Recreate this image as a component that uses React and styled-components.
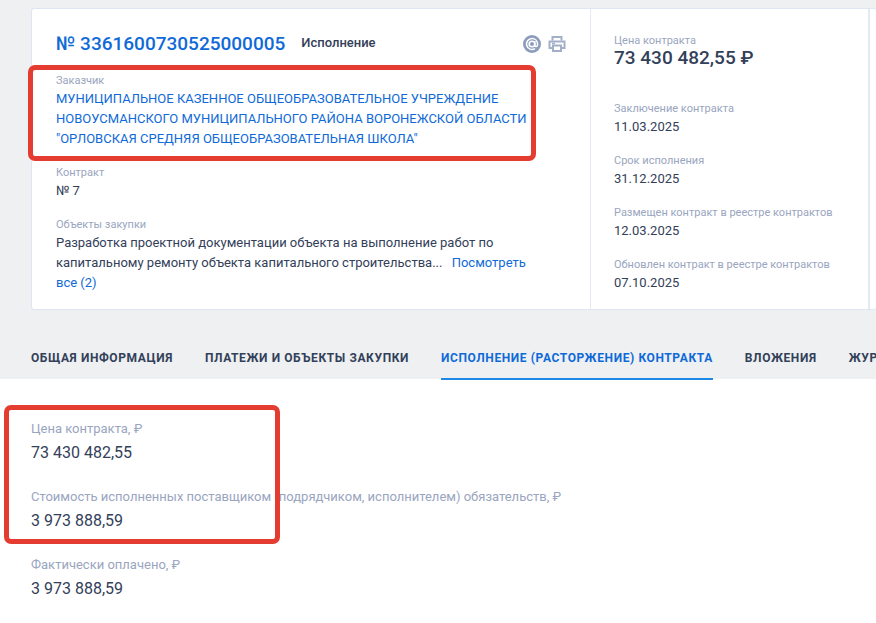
import React from "react";
import styled, { createGlobalStyle } from "styled-components";

const Global = createGlobalStyle`
  html, body { margin: 0; padding: 0; background: #fff; }
  body { font-family: Roboto, "Liberation Sans", sans-serif; color: #334059; overflow: hidden; }
  * { box-sizing: border-box; }
`;

const Page = styled.div`
  position: relative;
  width: 876px;
  height: 623px;
  overflow: hidden;
`;

const Top = styled.section`
  background: #eef0f2;
  height: 379px;
  padding: 8px 0 0 31px;
`;

const Card = styled.div`
  display: flex;
  width: 845px;
  height: 302px;
  background: #fff;
  border: 1px solid #dfe6f2;
  border-radius: 3px;
  border-right: none;
`;

const MainCol = styled.div`
  width: 559px;
  padding: 22px 0 0 24px;
  border-right: 1px solid #e4e9f4;
  flex: none;
`;

const SideCol = styled.div`
  width: 279px;
  padding: 24px 0 0 23px;
  border-right: 2px solid #e4e9f4;
  flex: none;
`;

const HeaderRow = styled.div`
  display: flex;
  align-items: center;
  height: 26px;
  margin-bottom: 16px;
`;

const Number = styled.a`
  font-size: 19px;
  font-weight: 500;
  color: #0f6ad8;
  line-height: 26px;
`;

const Status = styled.span`
  font-size: 13px;
  font-weight: 500;
  margin-left: 16px;
  margin-top: -3px;
  color: #334059;
`;

const Icons = styled.div`
  display: flex;
  gap: 7px;
  margin-left: auto;
  margin-right: 24px;
`;

const Field = styled.div`
  margin-bottom: ${(p) => p.$gap ?? 16}px;
`;

const Label = styled.div`
  font-size: 11px;
  line-height: 16px;
  color: #9aa5c0;
`;

const Customer = styled.a`
  display: block;
  font-size: 13px;
  line-height: 20px;
  color: #0f6ad8;
  width: 485px;
`;

const Value = styled.div`
  font-size: 13px;
  line-height: 20px;
  color: #334059;
  width: ${(p) => (p.$wide ? "480px" : "auto")};
`;

const Link = styled.a`
  color: #0f6ad8;
  margin-left: 6px;
`;

const Price = styled.div`
  font-size: 19px;
  line-height: 18px;
  font-weight: 500;
  color: #334059;
`;

const Tabs = styled.nav`
  display: flex;
  gap: 32px;
  margin-top: 30px;
  white-space: nowrap;
`;

const Tab = styled.div`
  font-size: 12px;
  font-weight: 700;
  line-height: 20px;
  letter-spacing: 0.6px;
  text-transform: uppercase;
  height: 40px;
  padding-top: 8px;
  color: ${(p) => (p.$active ? "#0f6ad8" : "#334059")};
  border-bottom: 2px solid ${(p) => (p.$active ? "#1e88e5" : "transparent")};
`;

const Details = styled.section`
  padding: 42px 0 0 31px;
`;

const Stat = styled.div`
  margin-bottom: 24px;
`;

const StatLabel = styled.div`
  font-size: 13px;
  line-height: 16px;
  color: #9aa5c0;
`;

const StatValue = styled.div`
  font-size: 16px;
  line-height: 24px;
  margin-top: 4px;
  color: #334059;
`;

const Highlight = styled.div`
  position: absolute;
  left: ${(p) => p.$x}px;
  top: ${(p) => p.$y}px;
  width: ${(p) => p.$w}px;
  height: ${(p) => p.$h}px;
  border: 5px solid #e53c32;
  border-radius: 7px;
  pointer-events: none;
`;

const AtIcon = () => (
  <svg width="18" height="18" viewBox="0 0 18 18">
    <circle cx="9" cy="9" r="9" fill="#8e9cbc" />
    <circle cx="9" cy="9" r="2.8" fill="none" stroke="#fff" strokeWidth="1.6" />
    <path d="M11.8 6v4c0 2 2.800 2 2.800-.6C14.600 6 12.200 3.500 9 3.500a5.500 5.500 0 1 0 3 10.100" fill="none" stroke="#fff" strokeWidth="1.500" />
  </svg>
);

const PrintIcon = () => (
  <svg width="18" height="18" viewBox="0 0 18 18" fill="none" stroke="#a3afc8" strokeWidth="2">
    <path d="M4.500 5.500V2h9v3.500" />
    <path d="M4 13H1.500V6.500h15V13H14" />
    <path d="M5 10.500h8V16H5z" />
    <path d="M4 8.500h3" strokeWidth="1.500" />
  </svg>
);

export default function App() {
  return (
    <Page>
      <Global />
      <Top>
        <Card>
          <MainCol>
            <HeaderRow>
              <Number>№ 3361600730525000005</Number>
              <Status>Исполнение</Status>
              <Icons>
                <AtIcon />
                <PrintIcon />
              </Icons>
            </HeaderRow>
            <Field>
              <Label>Заказчик</Label>
              <Customer>
                МУНИЦИПАЛЬНОЕ КАЗЕННОЕ ОБЩЕОБРАЗОВАТЕЛЬНОЕ УЧРЕЖДЕНИЕ НОВОУСМАНСКОГО МУНИЦИПАЛЬНОГО РАЙОНА ВОРОНЕЖСКОЙ ОБЛАСТИ "ОРЛОВСКАЯ СРЕДНЯЯ ОБЩЕОБРАЗОВАТЕЛЬНАЯ ШКОЛА"
              </Customer>
            </Field>
            <Field>
              <Label>Контракт</Label>
              <Value>№ 7</Value>
            </Field>
            <Field>
              <Label>Объекты закупки</Label>
              <Value $wide>
                Разработка проектной документации объекта на выполнение работ по капитальному ремонту объекта капитального строительства...{" "}
                <Link>Посмотреть все (2)</Link>
              </Value>
            </Field>
          </MainCol>
          <SideCol>
            <Field $gap={34}>
              <Label>Цена контракта</Label>
              <Price>73 430 482,55 ₽</Price>
            </Field>
            <Field>
              <Label>Заключение контракта</Label>
              <Value>11.03.2025</Value>
            </Field>
            <Field>
              <Label>Срок исполнения</Label>
              <Value>31.12.2025</Value>
            </Field>
            <Field>
              <Label>Размещен контракт в реестре контрактов</Label>
              <Value>12.03.2025</Value>
            </Field>
            <Field>
              <Label>Обновлен контракт в реестре контрактов</Label>
              <Value>07.10.2025</Value>
            </Field>
          </SideCol>
        </Card>
        <Tabs>
          <Tab>Общая информация</Tab>
          <Tab>Платежи и объекты закупки</Tab>
          <Tab $active>Исполнение (расторжение) контракта</Tab>
          <Tab>Вложения</Tab>
          <Tab>Журнал событий</Tab>
        </Tabs>
      </Top>
      <Details>
        <Stat>
          <StatLabel>Цена контракта, ₽</StatLabel>
          <StatValue>73 430 482,55</StatValue>
        </Stat>
        <Stat>
          <StatLabel>Стоимость исполненных поставщиком (подрядчиком, исполнителем) обязательств, ₽</StatLabel>
          <StatValue>3 973 888,59</StatValue>
        </Stat>
        <Stat>
          <StatLabel>Фактически оплачено, ₽</StatLabel>
          <StatValue>3 973 888,59</StatValue>
        </Stat>
      </Details>
      <Highlight $x={28} $y={65} $w={508} $h={96} />
      <Highlight $x={4} $y={405} $w={276} $h={139} />
    </Page>
  );
}
